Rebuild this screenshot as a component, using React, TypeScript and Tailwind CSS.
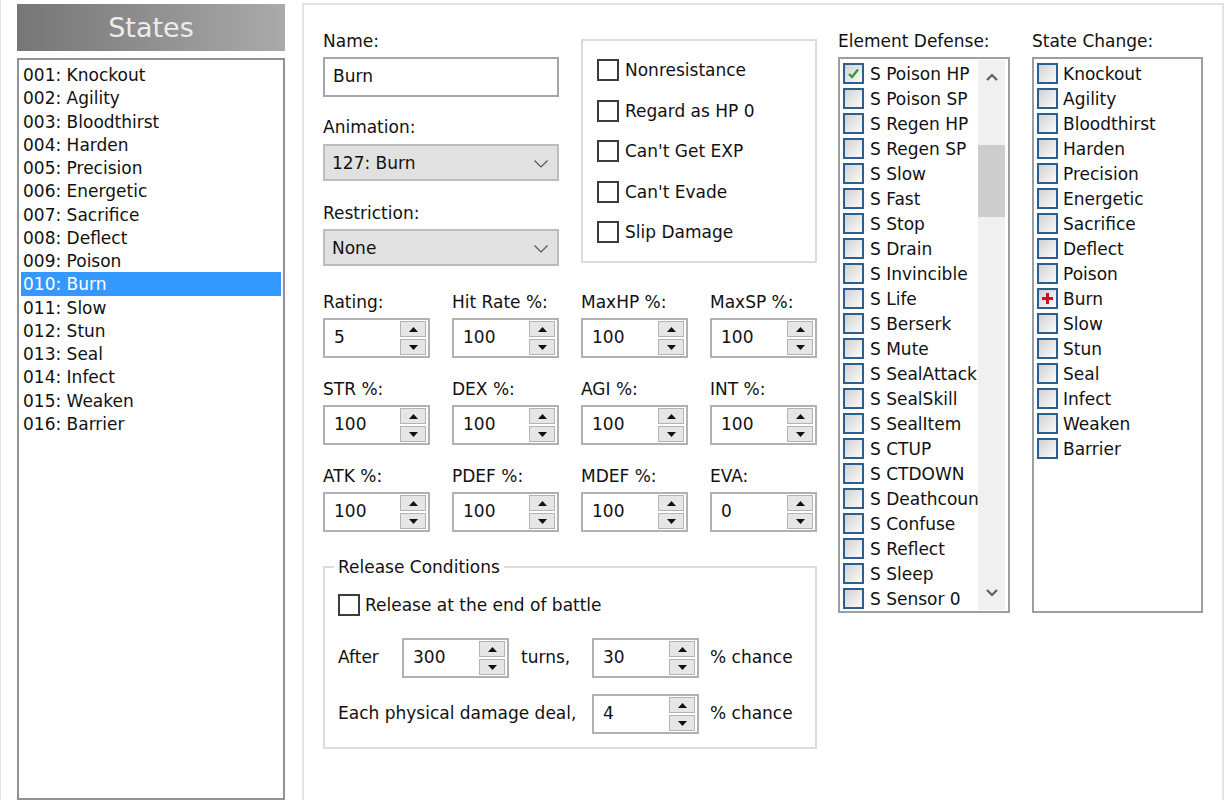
import React from 'react';

const states = [
  'Knockout', 'Agility', 'Bloodthirst', 'Harden', 'Precision', 'Energetic', 'Sacrifice', 'Deflect',
  'Poison', 'Burn', 'Slow', 'Stun', 'Seal', 'Infect', 'Weaken', 'Barrier',
];

const elements = [
  'S Poison HP', 'S Poison SP', 'S Regen HP', 'S Regen SP', 'S Slow', 'S Fast', 'S Stop', 'S Drain',
  'S Invincible', 'S Life', 'S Berserk', 'S Mute', 'S SealAttack', 'S SealSkill', 'S SealItem', 'S CTUP',
  'S CTDOWN', 'S Deathcounter', 'S Confuse', 'S Reflect', 'S Sleep', 'S Sensor 0',
];

const stats = [
  { label: 'Rating:', value: '5' },
  { label: 'Hit Rate %:', value: '100' },
  { label: 'MaxHP %:', value: '100' },
  { label: 'MaxSP %:', value: '100' },
  { label: 'STR %:', value: '100' },
  { label: 'DEX %:', value: '100' },
  { label: 'AGI %:', value: '100' },
  { label: 'INT %:', value: '100' },
  { label: 'ATK %:', value: '100' },
  { label: 'PDEF %:', value: '100' },
  { label: 'MDEF %:', value: '100' },
  { label: 'EVA:', value: '0' },
];

const flags = ['Nonresistance', 'Regard as HP 0', "Can't Get EXP", "Can't Evade", 'Slip Damage'];

function SpinBtn({ up }: { up?: boolean }) {
  return (
    <div className="flex h-[16px] w-[26px] items-center justify-center border border-[#b3b3b3] bg-[#e6e6e6]">
      <svg width="9" height="5" viewBox="0 0 9 5">
        <path d={up ? 'M0 5 L4.5 0 L9 5 Z' : 'M0 0 L4.5 5 L9 0 Z'} fill="#111" />
      </svg>
    </div>
  );
}

function Spin({ value }: { value: string }) {
  return (
    <div className="flex h-[40px] w-[107px] shrink-0 items-center border-2 border-[#b1b1b1] bg-white">
      <span className="flex-1 pl-[9px]">{value}</span>
      <div className="mr-[2px] flex flex-col gap-[2px]">
        <SpinBtn up />
        <SpinBtn />
      </div>
    </div>
  );
}

function Dropdown({ value }: { value: string }) {
  return (
    <div className="flex h-[37px] items-center justify-between border-2 border-[#bcbcbc] bg-[#e1e1e1] pl-[7px] pr-[9px] pt-[2px]">
      <span>{value}</span>
      <svg width="14" height="8" viewBox="0 0 14 8">
        <path d="M0.5 0.5 L7 7 L13.5 0.5" stroke="#555" strokeWidth="1.2" fill="none" />
      </svg>
    </div>
  );
}

function Checkbox() {
  return <div className="h-[22px] w-[22px] shrink-0 border-2 border-[#3c3c3c] bg-white" />;
}

function ListBox({ mark }: { mark?: 'check' | 'plus' }) {
  return (
    <div className="flex h-[21px] w-[21px] shrink-0 items-center justify-center border-2 border-[#2d5f8e] bg-linear-to-br from-[#d2d2d2] to-[#fbfbfb]">
      {mark === 'check' && (
        <svg width="15" height="15" viewBox="0 0 15 15">
          <path d="M3 8 L6 11 L12 3.5" stroke="#2f9a36" strokeWidth="2.2" fill="none" />
        </svg>
      )}
      {mark === 'plus' && (
        <svg width="15" height="15" viewBox="0 0 15 15">
          <path d="M7.5 2 V13 M2 7.5 H13" stroke="#c4161c" strokeWidth="3" fill="none" />
        </svg>
      )}
    </div>
  );
}

function Chevron({ up }: { up?: boolean }) {
  return (
    <svg width="12" height="8" viewBox="0 0 12 8">
      <path d={up ? 'M1 7 L6 2 L11 7' : 'M1 1 L6 6 L11 1'} stroke="#5e5e5e" strokeWidth="2.2" fill="none" />
    </svg>
  );
}

export default function App() {
  return (
    <div className="flex h-[800px] w-[1232px] overflow-hidden bg-white font-['DejaVu_Sans',Verdana,sans-serif] text-[17px] text-[#111]">
      {/* States list */}
      <div className="flex w-[302px] shrink-0 flex-col border-l border-[#e4e4e4] pl-[16px] pt-[4px]">
        <div className="h-[47px] w-[268px] bg-linear-to-r from-[#767676] to-[#aaaaaa] text-center text-[27px] leading-[47px] text-[#ececec]">
          States
        </div>
        <div className="mt-[7px] h-[760px] w-[268px] border-2 border-[#8e939a] pt-[3px]">
          {states.map((s, i) => (
            <div
              key={s}
              className={`mx-[2px] h-[23.27px] pl-[2px] leading-[24px] ${i === 9 ? 'bg-[#3399ff] text-white' : ''}`}
            >
              {String(i + 1).padStart(3, '0')}: {s}
            </div>
          ))}
        </div>
      </div>

      {/* Editor panel */}
      <div className="mt-[3px] flex h-[830px] w-[922px] shrink-0 border-2 border-[#e3e3e3] pl-[19px] pt-[25px]">
        <div className="flex w-[494px] shrink-0 flex-col">
          <div className="flex items-start">
            <div className="w-[236px]">
              <div className="h-[22px] leading-[22px]">Name:</div>
              <div className="mt-[5px] flex h-[40px] items-center border-2 border-[#a6a6a6] pl-[8px]">Burn</div>
              <div className="mt-[19px] h-[22px] leading-[22px]">Animation:</div>
              <div className="mt-[6px]">
                <Dropdown value="127: Burn" />
              </div>
              <div className="mt-[21px] h-[22px] leading-[22px]">Restriction:</div>
              <div className="mt-[5px]">
                <Dropdown value="None" />
              </div>
            </div>
            <div className="ml-[22px] mt-[9px] flex h-[224px] w-[236px] flex-col gap-[18.5px] border-2 border-[#dcdcdc] pl-[14px] pt-[18px]">
              {flags.map((f) => (
                <div key={f} className="flex h-[22px] items-center">
                  <Checkbox />
                  <span className="ml-[6px] pt-[2px]">{f}</span>
                </div>
              ))}
            </div>
          </div>

          <div className="mt-[25px] grid grid-cols-[repeat(4,107px)] gap-x-[22px] gap-y-[20px]">
            {stats.map((s) => (
              <div key={s.label}>
                <div className="h-[22px] leading-[22px]">{s.label}</div>
                <div className="mt-[5px]">
                  <Spin value={s.value} />
                </div>
              </div>
            ))}
          </div>

          <fieldset className="mt-[24px] w-[494px] border-2 border-[#dcdcdc] px-[13px] pb-[13px]">
            <legend className="ml-[-4px] px-[4px] leading-[22px]">Release Conditions</legend>
            <div className="mt-[16px] flex h-[22px] items-center">
              <Checkbox />
              <span className="ml-[5px] pt-[2px]">Release at the end of battle</span>
            </div>
            <div className="mt-[22px] flex items-center">
              <span className="w-[64px] shrink-0">After</span>
              <Spin value="300" />
              <span className="ml-[12px] w-[71px] shrink-0">turns,</span>
              <Spin value="30" />
              <span className="ml-[11px] whitespace-nowrap">% chance</span>
            </div>
            <div className="mt-[16px] flex items-center">
              <span className="w-[254px] shrink-0">Each physical damage deal,</span>
              <Spin value="4" />
              <span className="ml-[11px] whitespace-nowrap">% chance</span>
            </div>
          </fieldset>
        </div>

        {/* Element Defense */}
        <div className="ml-[21px] w-[172px] shrink-0">
          <div className="h-[22px] whitespace-nowrap leading-[22px]">Element Defense:</div>
          <div className="mt-[5px] flex h-[556px] border-2 border-[#9a9ea5] bg-white">
            <div className="min-w-0 flex-1 overflow-hidden pl-[3px] pt-[2px]">
              {elements.map((e, i) => (
                <div key={e} className="flex h-[25px] items-center whitespace-nowrap">
                  <ListBox mark={i === 0 ? 'check' : undefined} />
                  <span className="ml-[6px] pt-[2px]">{e}</span>
                </div>
              ))}
            </div>
            <div className="my-[1px] mr-[3px] flex w-[27px] shrink-0 flex-col bg-[#f0f0f0]">
              <div className="flex h-[34px] items-center justify-center">
                <Chevron up />
              </div>
              <div className="flex-1">
                <div className="mt-[51px] h-[72px] bg-[#cdcdcd]" />
              </div>
              <div className="flex h-[34px] items-center justify-center">
                <Chevron />
              </div>
            </div>
          </div>
        </div>

        {/* State Change */}
        <div className="ml-[22px] w-[171px] shrink-0">
          <div className="h-[22px] whitespace-nowrap leading-[22px]">State Change:</div>
          <div className="mt-[5px] h-[556px] overflow-hidden border-2 border-[#9a9ea5] bg-white pl-[3px] pt-[2px]">
            {states.map((s) => (
              <div key={s} className="flex h-[25px] items-center whitespace-nowrap">
                <ListBox mark={s === 'Burn' ? 'plus' : undefined} />
                <span className="ml-[5px] pt-[2px]">{s}</span>
              </div>
            ))}
          </div>
        </div>
      </div>
    </div>
  );
}
